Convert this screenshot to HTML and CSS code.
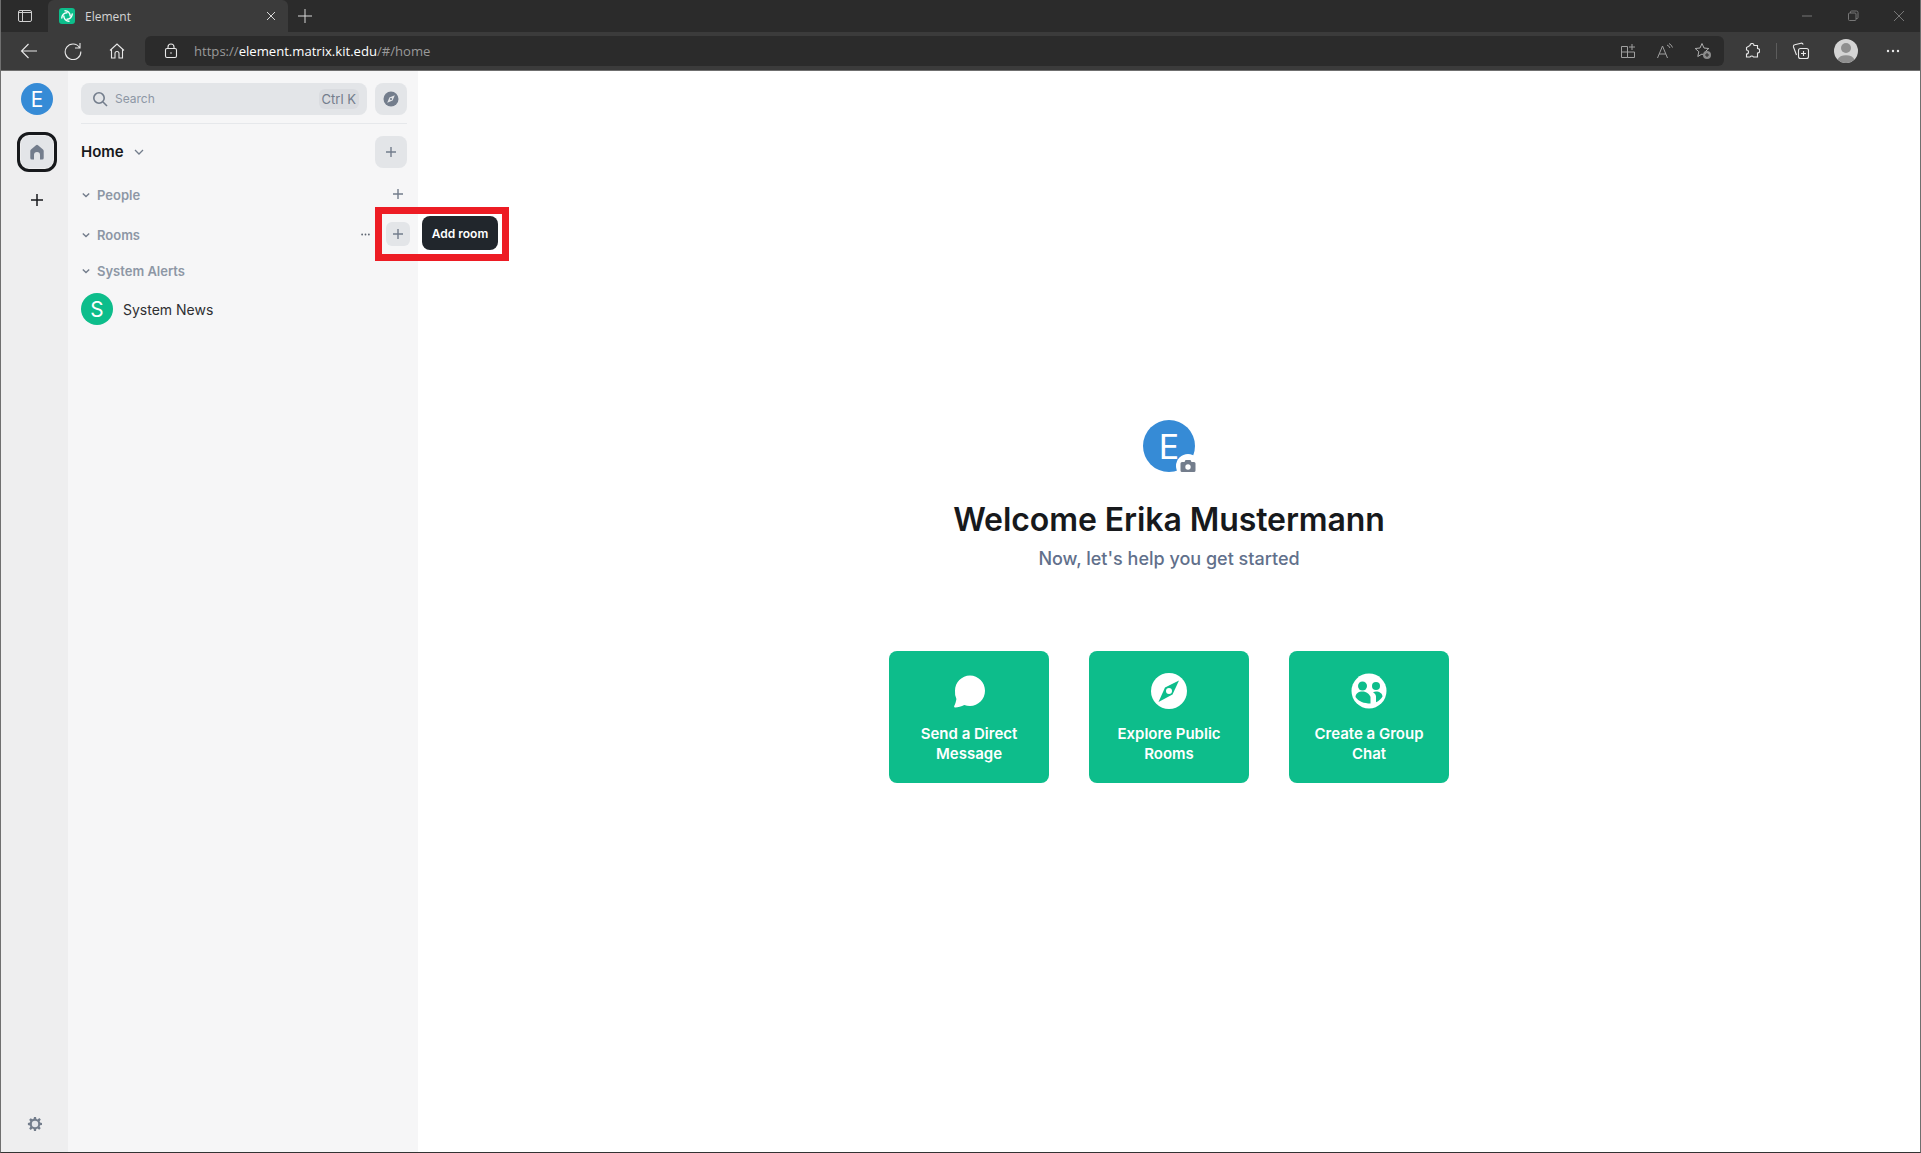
FILE: index.html
```html
<!DOCTYPE html>
<html lang="en">
<head>
<meta charset="utf-8">
<title>Element</title>
<link rel="stylesheet" href="styles.css">
</head>
<body>
<div class="window">
  <div class="tabstrip">
    <div class="tab-actions">
      <svg class="chrome-ic" viewBox="0 0 16 16" width="16" height="16" fill="none" stroke="#d0d0d0"><rect x="1.5" y="2.5" width="13" height="11" rx="1.5"/><path d="M5.5 3v10M2 4.5h12" /></svg>
    </div>
    <div class="tab">
      <svg viewBox="0 0 16 16" width="16" height="16"><rect width="16" height="16" rx="3" fill="#0dbd8b"/><g fill="none" stroke="#fff" stroke-width="1.4" stroke-linecap="round"><path d="M6 2.800A5.200 5.200 0 0 1 11.200 8"/><path d="M13.200 6A5.200 5.200 0 0 1 8 11.200"/><path d="M10 13.200A5.200 5.200 0 0 1 4.800 8"/><path d="M2.800 10A5.200 5.200 0 0 1 8 4.800"/></g></svg>
      <span class="tab-title">Element</span>
      <svg class="tab-close" viewBox="0 0 10 10" width="10" height="10" stroke="#d8d8d8" fill="none"><path d="M1 1l8 8M9 1l-8 8"/></svg>
    </div>
    <svg class="new-tab" viewBox="0 0 16 16" width="16" height="16" stroke="#d8d8d8" fill="none"><path d="M8 1v14M1 8h14"/></svg>
    <div class="win-controls">
      <svg viewBox="0 0 12 12" width="12" height="12" stroke="#777" fill="none"><path d="M1 6h10"/></svg>
      <svg viewBox="0 0 12 12" width="12" height="12" stroke="#777" fill="none"><rect x="1.5" y="3" width="7.5" height="7.5" rx="1"/><path d="M3.5 3V2a1 1 0 0 1 1-1h5a1.5 1.5 0 0 1 1.5 1.5v5a1 1 0 0 1-1 1H9"/></svg>
      <svg viewBox="0 0 12 12" width="12" height="12" stroke="#777" fill="none"><path d="M1 1l10 10M11 1L1 11"/></svg>
    </div>
  </div>
  <div class="toolbar">
    <div class="nav-buttons">
      <svg viewBox="0 0 18 18" width="18" height="18" fill="none" stroke="#e8e8e8" stroke-width="1.1"><path d="M17 9H1.5M8.5 2L1.5 9l7 7"/></svg>
      <svg viewBox="0 0 18 18" width="18" height="18" fill="none" stroke="#e8e8e8" stroke-width="1.1"><path d="M15.5 5.5A7.8 7.8 0 1 0 16.8 9.5M16 1v5h-5"/></svg>
      <svg viewBox="0 0 18 18" width="18" height="18" fill="none" stroke="#e8e8e8" stroke-width="1.1"><path d="M2 8.5L9 2l7 6.500M3.500 7.500v8.500h3.500v-4.500a2 2 0 0 1 4 0v4.500h3.500v-8.500"/></svg>
    </div>
    <div class="addressbar">
      <svg class="lock" viewBox="0 0 14 16" width="14" height="16" fill="none" stroke="#e8e8e8" stroke-width="1.1"><rect x="1.500" y="5.500" width="11" height="9" rx="1.500"/><path d="M4 5.500V4a3 3 0 0 1 6 0v1.500"/><circle cx="7" cy="10" r="0.800" fill="#e8e8e8" stroke="none"/></svg>
      <span class="url"><span class="url-dim">https://</span><span class="url-host">element.matrix.kit.edu</span><span class="url-dim">/#/home</span></span>
      <div class="addr-icons">
        <svg viewBox="0 0 16 16" width="16" height="16" fill="none" stroke="#a0a0a0"><path d="M1.500 3.500h6v11h-6zM7.500 9h7v5.500h-7M1.500 9h6M12 1v6M9 4h6"/></svg>
        <svg viewBox="0 0 18 16" width="18" height="16" fill="none" stroke="#a0a0a0"><path d="M1.500 15L6.500 3l5 12M3.200 11h6.600M11 2a5 5 0 0 1 3 3M13 0.500a7 7 0 0 1 3.500 4"/></svg>
        <svg viewBox="0 0 18 18" width="18" height="18"><path d="M8 1.500l2 4.500 4.800.5-3.600 3.200 1 4.800L8 12l-4.200 2.500 1-4.800L1.200 6.500 6 6z" fill="none" stroke="#b0b0b0"/><circle cx="13" cy="13" r="4" fill="#8c8c8c"/><path d="M13 11v4M11 13h4" stroke="#2b2b2b"/></svg>
      </div>
    </div>
    <div class="tool-icons">
      <svg viewBox="0 0 16 16" width="16" height="16" fill="none" stroke="#e8e8e8" stroke-width="1.100"><path d="M6 2.500a2 2 0 0 1 4 0h3.500v3a2 2 0 0 1 0 4.500v4H9.500a2 2 0 0 0-3.500 0H2.500v-3a2 2 0 0 0 0-4V4.500z"/></svg>
      <span class="tool-sep"></span>
      <svg viewBox="0 0 18 18" width="18" height="18" fill="none" stroke="#e8e8e8" stroke-width="1.100"><rect x="6.500" y="6.500" width="10" height="10" rx="2"/><path d="M11.500 9v5M9 11.500h5M4.500 13L1.500 5c-.3-1 .3-2 1.200-2.200L9 1.200c1-.2 1.800.3 2.200 1.300"/></svg>
      <span class="profile">
        <svg viewBox="0 0 24 24" width="24" height="24"><circle cx="12" cy="12" r="12" fill="#d4d4d4"/><circle cx="12" cy="9" r="5" fill="#8f8f8f"/><path d="M3.500 20.500a9 6.500 0 0 1 17 0A12 12 0 0 1 3.500 20.500z" fill="#8f8f8f"/></svg>
      </span>
      <svg viewBox="0 0 14 4" width="14" height="4" fill="#e8e8e8"><circle cx="2" cy="2" r="1.200"/><circle cx="7" cy="2" r="1.200"/><circle cx="12" cy="2" r="1.200"/></svg>
    </div>
  </div>
  <div class="app">
    <nav class="spacepanel">
      <div class="avatar avatar-blue avatar-user">E</div>
      <div class="home-btn">
        <span class="home-inner">
          <svg viewBox="0 0 16 16" width="16" height="16" fill="#737d8c"><path d="M8 .8a1.500 1.500 0 0 1 1 .4l5 4.200c.5.400.7.900.7 1.500V14a1.500 1.500 0 0 1-1.500 1.500H11V11a3 3 0 0 0-6 0v4.500H2.800A1.500 1.500 0 0 1 1.300 14V6.900c0-.6.200-1.100.7-1.500l5-4.200a1.500 1.500 0 0 1 1-.4z"/></svg>
        </span>
      </div>
      <svg class="space-add" viewBox="0 0 12 12" width="12" height="12" stroke="#17191c" stroke-width="1.500" fill="none"><path d="M6 0v12M0 6h12"/></svg>
      <svg class="gear" viewBox="0 0 16 16" width="16" height="16"><path fill="#737d8c" d="M7 1h2l.4 1.900 1.200.5L12.300 2l1.500 1.500-1.200 1.700.5 1.200 1.900.5v2l-1.900.4-.5 1.200 1.100 1.700-1.500 1.500-1.700-1.100-1.200.5L9 15H7l-.4-1.900-1.200-.5L3.700 14l-1.500-1.500 1.100-1.700-.5-1.200L.9 9.100V7l1.900-.4.5-1.200L2.200 3.700 3.700 2.200l1.700 1.100 1.200-.5z"/><circle cx="8" cy="8" r="3.200" fill="#e4e6ea"/></svg>
    </nav>
    <aside class="roomlist">
      <div class="search-row">
        <div class="search">
          <svg viewBox="0 0 16 16" width="16" height="16" fill="none" stroke="#737d8c" stroke-width="1.600"><circle cx="7" cy="7" r="5.200"/><path d="M11 11l4 4"/></svg>
          <span class="search-label">Search</span>
          <span class="kbd">Ctrl K</span>
        </div>
        <div class="square-btn">
          <svg viewBox="0 0 16 16" width="16" height="16"><circle cx="8" cy="8" r="7.500" fill="#737d8c"/><path d="M11.800 4.200L9.600 9.600 4.200 11.800 6.400 6.400z" fill="#e3e5e8"/><circle cx="8" cy="8" r="1.100" fill="#737d8c"/></svg>
        </div>
      </div>
      <div class="home-row">
        <span class="home-title">Home</span>
        <svg class="home-chev" viewBox="0 0 10 6" width="10" height="6" fill="none" stroke="#737d8c" stroke-width="1.300"><path d="M1 1l4 4 4-4"/></svg>
        <div class="square-btn">
          <svg viewBox="0 0 12 12" width="12" height="12" stroke="#737d8c" stroke-width="1.400" fill="none"><path d="M6 1v10M1 6h10"/></svg>
        </div>
      </div>
      <div class="section section-people">
        <svg class="chev" viewBox="0 0 10 6" width="8" height="6" fill="none" stroke="#737d8c" stroke-width="1.700"><path d="M1 1l4 4 4-4"/></svg>
        <span class="section-label">People</span>
        <svg class="section-add" viewBox="0 0 12 12" width="12" height="12" stroke="#737d8c" stroke-width="1.400" fill="none"><path d="M6 1v10M1 6h10"/></svg>
      </div>
      <div class="section section-rooms">
        <svg class="chev" viewBox="0 0 10 6" width="8" height="6" fill="none" stroke="#737d8c" stroke-width="1.700"><path d="M1 1l4 4 4-4"/></svg>
        <span class="section-label">Rooms</span>
        <svg class="more" viewBox="0 0 12 4" width="11" height="3" fill="#5c6470"><circle cx="1.500" cy="2" r="1.200"/><circle cx="6" cy="2" r="1.200"/><circle cx="10.500" cy="2" r="1.200"/></svg>
        <span class="rooms-add">
          <svg viewBox="0 0 12 12" width="12" height="12" stroke="#737d8c" stroke-width="1.400" fill="none"><path d="M6 1v10M1 6h10"/></svg>
        </span>
      </div>
      <div class="section section-alerts">
        <svg class="chev" viewBox="0 0 10 6" width="8" height="6" fill="none" stroke="#737d8c" stroke-width="1.700"><path d="M1 1l4 4 4-4"/></svg>
        <span class="section-label">System Alerts</span>
      </div>
      <div class="room">
        <div class="avatar avatar-green">S</div>
        <span class="room-name">System News</span>
      </div>
      <div class="tooltip">Add room</div>
      <div class="highlight"></div>
    </aside>
    <main class="home">
      <div class="home-stack">
        <div class="welcome-avatar">
          <div class="avatar avatar-blue avatar-big">E</div>
          <span class="camera">
            <svg viewBox="0 0 16 14" width="16" height="14"><path fill="#737d8c" d="M5.500 1h5l1 2H14a1.500 1.500 0 0 1 1.500 1.500v7A1.500 1.500 0 0 1 14 13H2A1.500 1.500 0 0 1 .5 11.500v-7A1.500 1.500 0 0 1 2 3h2.500z"/><circle cx="8" cy="8" r="2.700" fill="#fff"/></svg>
          </span>
        </div>
        <h1 class="welcome">Welcome Erika Mustermann</h1>
        <p class="subtitle">Now, let's help you get started</p>
        <div class="actions">
          <a class="action">
            <svg viewBox="0 0 36 36" width="36" height="36"><path fill="#fff" d="M19 2.500c8.300 0 15 6.900 15 15.300S27.300 33 19 33c-2 0-4-.4-5.700-1.100-2.700 1.300-6.600 2.300-8.800 2.600-1 .1-1.700-.8-1.300-1.600 1-1.800 1.900-4.800 2.200-7A15.500 15.500 0 0 1 4 17.800C4 9.400 10.700 2.500 19 2.500z"/></svg>
            <span>Send a Direct Message</span>
          </a>
          <a class="action">
            <svg viewBox="0 0 36 36" width="36" height="36"><circle cx="18" cy="18" r="18" fill="#fff"/><path fill="#0dbd8b" d="M28 7.500l-6.500 14-14 7.500 6.500-14.500z"/><circle cx="18" cy="18" r="3" fill="#fff"/></svg>
            <span>Explore Public Rooms</span>
          </a>
          <a class="action">
            <svg viewBox="0 0 36 36" width="36" height="36"><circle cx="18" cy="18" r="17.500" fill="#fff"/><circle cx="11.500" cy="13" r="4.500" fill="#0dbd8b"/><circle cx="25" cy="13" r="4" fill="#0dbd8b"/><path fill="#0dbd8b" d="M4.500 24c0-3.500 3-5.500 7-5.500s7 2.500 8 5.500v6.500c-6.500 0-12-2-15-6.500z"/><path fill="#0dbd8b" d="M22 19.500c1-.7 2-1 3-1 3.500 0 6.500 2 6.500 5-1.500 2.500-3.500 4.500-6.500 5.800v-5.800c0-1.500-1-3-3-4z"/></svg>
            <span>Create a Group Chat</span>
          </a>
        </div>
      </div>
    </main>
  </div>
</div>
</body>
</html>
```
FILE: styles.css
```css
* { box-sizing: border-box; }
html, body { margin: 0; height: 100%; }
body { font-family: Inter, "Liberation Sans", sans-serif; background: #fff; overflow: hidden; }
.window { display: flex; flex-direction: column; width: 100%; height: 1153px; border-left: 1px solid #6f6f6f; border-right: 1px solid #6f6f6f; border-bottom: 1px solid #333; }

.tabstrip { display: flex; align-items: center; height: 32px; background: #2b2b2b; flex: none; }
.tab-actions { width: 47px; display: flex; justify-content: center; }
.tab { display: flex; align-items: center; width: 240px; height: 32px; padding-left: 11px; background: #3b3b3b; border-radius: 6px 6px 0 0; }
.tab-title { margin-left: 10px; font: 12px "Open Sans", sans-serif; color: #d4d4d4; flex: 1; }
.tab-close { margin-right: 12px; }
.new-tab { margin-left: 9px; }
.win-controls { margin-left: auto; display: flex; gap: 34px; padding-right: 15px; }

.toolbar { display: flex; align-items: center; height: 39px; flex: none; background: #3b3b3b; border-bottom: 1px solid #6f6f6f; }
.nav-buttons { display: flex; align-items: center; gap: 26px; padding-left: 19px; width: 144px; }
.addressbar { display: flex; align-items: center; width: 1579px; height: 30px; background: #2b2b2b; border-radius: 6px; padding-left: 19px; margin-bottom: 1px; }
.lock { flex: none; }
.url { margin-left: 16px; font: 13.100px "Open Sans", sans-serif; }
.url-dim { color: #9a9a9a; }
.url-host { color: #fff; }
.addr-icons { margin-left: auto; display: flex; align-items: center; gap: 20px; padding-right: 12px; }
.tool-icons { display: flex; align-items: center; padding-left: 20px; }
.tool-sep { width: 1px; height: 16px; background: #5c5c5c; margin: 0 15px 0 16px; }
.profile { display: flex; margin-left: 24px; margin-right: 28px; }

.app { display: flex; flex: 1; min-height: 0; }
.spacepanel { position: relative; width: 67px; flex: none; background: #eeeeef; display: flex; flex-direction: column; align-items: center; padding-top: 12px; padding-left: 5px; }
.avatar { display: flex; align-items: center; justify-content: center; border-radius: 50%; color: #fff; flex: none; }
.avatar-blue { background: #368bd6; }
.avatar-green { background: #0dbd8b; width: 32px; height: 32px; font-size: 20.800px; }
.avatar-user { width: 32px; height: 32px; font-size: 20.800px; }
.avatar-big { width: 52px; height: 52px; font-size: 34px; }
.home-btn { margin-top: 17px; width: 40px; height: 40px; border: 3px solid #17191c; border-radius: 12px; padding: 1px; display: flex; }
.home-inner { flex: 1; background: #e3e5e8; border-radius: 8px; display: flex; align-items: center; justify-content: center; }
.space-add { margin-top: 22px; }
.gear { margin-top: auto; margin-bottom: 20px; margin-right: 4px; }

.roomlist { position: relative; width: 350px; flex: none; background: #f6f6f7; padding: 0 11px 0 13px; }
.search-row { display: flex; align-items: center; gap: 8px; padding: 12px 0 8px; border-bottom: 1px solid #e6e8eb; height: 53px; }
.search { display: flex; align-items: center; flex: 1; height: 32px; background: #e3e5e8; border-radius: 8px; padding: 0 8px 0 11px; }
.search-label { margin-left: 7px; margin-bottom: 2px; font-size: 12px; color: #8d97a5; flex: 1; }
.kbd { font-size: 13px; color: #737d8c; background: #dadce0; border-radius: 6px; padding: 2px 3px; }
.square-btn { width: 32px; height: 32px; flex: none; background: #e3e5e8; border-radius: 8px; display: flex; align-items: center; justify-content: center; }
.home-row { display: flex; align-items: center; margin-top: 12px; height: 32px; }
.home-title { font-size: 15px; font-weight: 600; color: #17191c; margin-bottom: 1px; }
.home-chev { margin-left: 10px; margin-right: auto; }
.section { display: flex; align-items: center; height: 20px; }
.section-people { margin-top: 17px; }
.section-rooms { margin-top: 20px; }
.section-alerts { margin-top: 16px; }
.chev { margin-left: 1px; flex: none; }
.section-label { margin-left: 7px; font-size: 13px; font-weight: 600; color: #8d97a5; }
.section-add { margin-left: auto; margin-right: 3px; margin-bottom: 3px; }
.more { margin-left: auto; margin-right: 15px; margin-bottom: 2px; }
.rooms-add { width: 24px; height: 24px; margin-right: -3px; margin-bottom: 2px; background: #e3e5e8; border-radius: 6px; display: flex; align-items: center; justify-content: center; flex: none; }
.room { display: flex; align-items: center; margin-top: 12px; }
.room-name { margin-left: 10px; font-size: 14px; color: #2e2f32; }

.tooltip { position: absolute; left: 354px; top: 145px; width: 76px; height: 34px; background: #21262c; color: #fff; font-size: 12px; font-weight: 600; border-radius: 8px; display: flex; align-items: center; justify-content: center; z-index: 2; }
.highlight { position: absolute; left: 307px; top: 136px; width: 134px; height: 54px; border: 7px solid #ed1c24; z-index: 3; }

.home { flex: 1; display: flex; justify-content: center; min-width: 0; }
.home-stack { display: flex; flex-direction: column; align-items: center; padding-top: 349px; }
.welcome-avatar { position: relative; width: 52px; height: 52px; }
.camera { position: absolute; right: -5px; bottom: -6px; width: 24px; height: 24px; background: #fff; border-radius: 50%; display: flex; align-items: center; justify-content: center; }
.welcome { margin: 28px 0 0; font-size: 32px; line-height: 40px; font-weight: 600; letter-spacing: -0.08px; color: #17191c; }
.subtitle { margin: 8px 0 0; font-size: 18px; line-height: 22px; font-weight: 500; color: #61708b; }
.actions { display: flex; gap: 40px; margin-top: 81px; }
.action { width: 160px; height: 132px; background: #0dbd8b; color: #fff; border-radius: 8px; display: flex; flex-direction: column; align-items: center; padding: 22px 20px 0; text-align: center; font-size: 15px; line-height: 20px; font-weight: 600; }
.action span { margin-top: 15px; }
```
